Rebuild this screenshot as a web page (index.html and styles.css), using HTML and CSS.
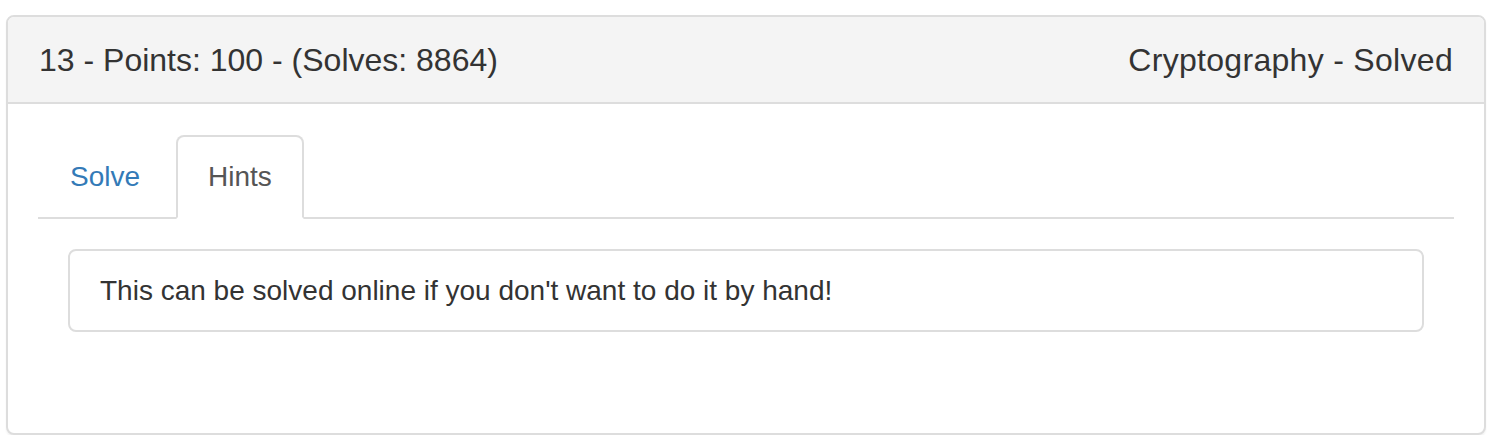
FILE: index.html
```html
<!DOCTYPE html>
<html>
<head>
<meta charset="utf-8">
<link rel="stylesheet" href="styles.css">
</head>
<body>
<div class="panel">
  <div class="panel-heading">
    <h3 class="panel-title">13 - Points: 100 - (Solves: 8864)</h3>
    <span class="panel-title panel-category">Cryptography - Solved</span>
  </div>
  <div class="panel-body">
    <ul class="nav-tabs">
      <li><a class="tab">Solve</a></li>
      <li><a class="tab active">Hints</a></li>
    </ul>
    <div class="tab-content">
      <div class="hint">This can be solved online if you don't want to do it by hand!</div>
    </div>
  </div>
</div>
</body>
</html>
```
FILE: styles.css
```css
html, body {
  margin: 0;
  padding: 0;
  background: #fff;
}
body {
  padding: 15px 16px 0 6px;
  font-family: "Liberation Sans", Arial, Helvetica, sans-serif;
  font-size: 28px;
  line-height: 40px;
  color: #333;
}
.panel {
  border: 2px solid #ddd;
  border-radius: 8px;
  background: #fff;
  box-shadow: 0 2px 2px rgba(0,0,0,0.05);
}
.panel-heading {
  display: flex;
  justify-content: space-between;
  align-items: center;
  height: 85px;
  padding: 0 31px 0 31px;
  background: #f4f4f4;
  border-bottom: 2px solid #ddd;
  border-radius: 6px 6px 0 0;
}
.panel-title {
  margin: 0;
  font-size: 32px;
  font-weight: normal;
  line-height: 36px;
  color: #333;
}
.panel-category {
  letter-spacing: 0.3px;
}
.panel-body {
  padding: 31px 30px 30px 30px;
}
.nav-tabs {
  display: flex;
  list-style: none;
  margin: 0;
  padding: 0;
  border-bottom: 2px solid #ddd;
}
.nav-tabs li {
  margin-bottom: -2px;
}
.tab {
  display: block;
  margin-right: 4px;
  padding: 20px 30px;
  border: 2px solid transparent;
  border-radius: 8px 8px 0 0;
  color: #337ab7;
  line-height: 40px;
}
.tab.active {
  color: #555;
  background: #fff;
  border-color: #ddd #ddd transparent #ddd;
}
.tab-content {
  padding: 30px 30px 71px 30px;
}
.hint {
  border: 2px solid #ddd;
  border-radius: 8px;
  padding: 20px 30px;
  line-height: 39px;
}
```
